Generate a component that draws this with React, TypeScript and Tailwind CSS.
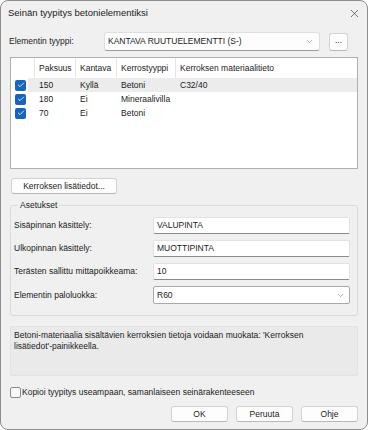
import { Check, X, ChevronDown } from 'lucide-react'

const rows = [
  { on: true, thick: '150', load: 'Kyllä', kind: 'Betoni', mat: 'C32/40', sel: true },
  { on: true, thick: '180', load: 'Ei', kind: 'Mineraalivilla', mat: '', sel: false },
  { on: true, thick: '70', load: 'Ei', kind: 'Betoni', mat: '', sel: false },
]

const fields = [
  { label: 'Sisäpinnan käsittely:', value: 'VALUPINTA' },
  { label: 'Ulkopinnan käsittely:', value: 'MUOTTIPINTA' },
  { label: 'Terästen sallittu mittapoikkeama:', value: '10' },
]

function WinButton({ children, className = '' }: { children: React.ReactNode; className?: string }) {
  return (
    <button
      className={`h-[16px] rounded-[3px] border border-[#d3d3d3] border-b-[#b8b8b8] bg-[#fdfdfd] text-[8.5px] leading-none text-[#1b1b1b] ${className}`}
    >
      {children}
    </button>
  )
}

export default function App() {
  return (
    <div
      className="flex h-[430px] w-[368px] flex-col overflow-hidden rounded-[8px] border border-[#8d8d8d] bg-[#f0f0f0] text-[8.5px] text-[#1b1b1b]"
      style={{ fontFamily: '"Liberation Sans", Arial, sans-serif' }}
    >
      {/* title bar */}
      <div className="flex h-[25px] shrink-0 items-center justify-between pl-[7px] pr-[6px]">
        <span className="text-[9.5px]">Seinän tyypitys betonielementiksi</span>
        <X className="h-[13px] w-[13px] text-[#333]" strokeWidth={1.2} />
      </div>

      <div className="flex flex-col px-[9px]">
        {/* element type */}
        <div className="mt-[6px] flex items-center">
          <span className="w-[95px] -ml-[1px]">Elementin tyyppi:</span>
          <div className="flex h-[19px] w-[216px] items-center justify-between rounded-[3px] border border-[#dedede] border-b-[#9a9a9a] bg-[#fdfdfd] pl-[3px] pr-[5px]">
            <span>KANTAVA RUUTUELEMENTTI (S-)</span>
            <ChevronDown className="h-[9px] w-[9px] text-[#666]" strokeWidth={1.4} />
          </div>
          <button className="ml-[9px] flex h-[18px] w-[19px] items-center justify-center rounded-[3px] border border-[#d3d3d3] border-b-[#b8b8b8] bg-[#fdfdfd] pb-[3px] leading-none">
            ...
          </button>
        </div>

        {/* layer list */}
        <div className="mt-[6px] h-[112px] border border-[#b0b0b0] bg-white">
          <div className="flex h-[20px] items-center">
            <div className="h-full w-[24px] border-r border-[#e5e5e5]" />
            <div className="flex h-full w-[41px] items-center border-r border-[#e5e5e5] pl-[4px]">Paksuus</div>
            <div className="flex h-full w-[41px] items-center border-r border-[#e5e5e5] pl-[4px]">Kantava</div>
            <div className="flex h-full w-[59px] items-center border-r border-[#e5e5e5] pl-[4px]">Kerrostyyppi</div>
            <div className="flex h-full items-center pl-[4px]">Kerroksen materiaalitieto</div>
          </div>
          {rows.map((r) => (
            <div key={r.thick + r.kind} className="flex h-[14px] items-center">
              <div className="flex w-[17px] shrink-0 justify-end pr-[2px]">
                <span className="flex h-[11px] w-[11px] items-center justify-center rounded-[2px] bg-[#1565c0]">
                  <Check className="h-[8px] w-[8px] text-white" strokeWidth={2.5} />
                </span>
              </div>
              <div className={`flex h-full flex-1 items-center ${r.sel ? 'bg-[#ececec]' : ''}`}>
                <div className="w-[7px]" />
                <div className="w-[41px] pl-[4px]">{r.thick}</div>
                <div className="w-[41px] pl-[4px]">{r.load}</div>
                <div className="w-[59px] pl-[4px]">{r.kind}</div>
                <div className="pl-[4px]">{r.mat}</div>
              </div>
            </div>
          ))}
        </div>

        <WinButton className="mt-[9px] w-[106px] self-start border-[#86a9cf] border-b-[#6b93c0] ml-[1px]">
          Kerroksen lisätiedot...
        </WinButton>

        {/* settings group */}
        <fieldset className="mt-[6px] rounded-[3px] border border-[#dadada] pb-[11px] pl-[3px] pr-[7px]">
          <legend className="ml-[4px] px-[2px] leading-[11px]">Asetukset</legend>
          <div className="mt-[6px] flex flex-col gap-[6px]">
            {fields.map((f) => (
              <div key={f.label} className="flex items-center">
                <span className="flex-1">{f.label}</span>
                <div className="flex h-[17px] w-[197px] items-center rounded-[2px] border border-[#e2e2e2] border-b-[#8a8a8a] bg-white pl-[3px]">
                  {f.value}
                </div>
              </div>
            ))}
            <div className="flex items-center">
              <span className="flex-1">Elementin paloluokka:</span>
              <div className="flex h-[18px] w-[197px] items-center justify-between rounded-[2px] border border-[#a9a9a9] bg-white pl-[3px] pr-[4px]">
                <span>R60</span>
                <ChevronDown className="h-[9px] w-[9px] text-[#666]" strokeWidth={1.4} />
              </div>
            </div>
          </div>
        </fieldset>

        {/* info */}
        <div className="mt-[10px] h-[50px] rounded-[2px] border border-[#e3e3e3] bg-[#eaeaea] px-[3px] pt-[3px] leading-[10.5px]">
          Betoni-materiaalia sisältävien kerroksien tietoja voidaan muokata: 'Kerroksen{' '}
          <span className="whitespace-nowrap">lisätiedot'-painikkeella.</span>
        </div>

        <label className="mt-[10px] flex items-center">
          <span className="h-[11px] w-[11px] rounded-[2px] border border-[#8a8a8a] bg-[#f7f7f7]" />
          <span className="ml-[1px]">Kopioi tyypitys useampaan, samanlaiseen seinärakenteeseen</span>
        </label>

        <div className="mt-[7px] flex justify-end gap-[8px]">
          <WinButton className="w-[57px]">OK</WinButton>
          <WinButton className="w-[57px]">Peruuta</WinButton>
          <WinButton className="w-[57px]">Ohje</WinButton>
        </div>
      </div>
    </div>
  )
}
